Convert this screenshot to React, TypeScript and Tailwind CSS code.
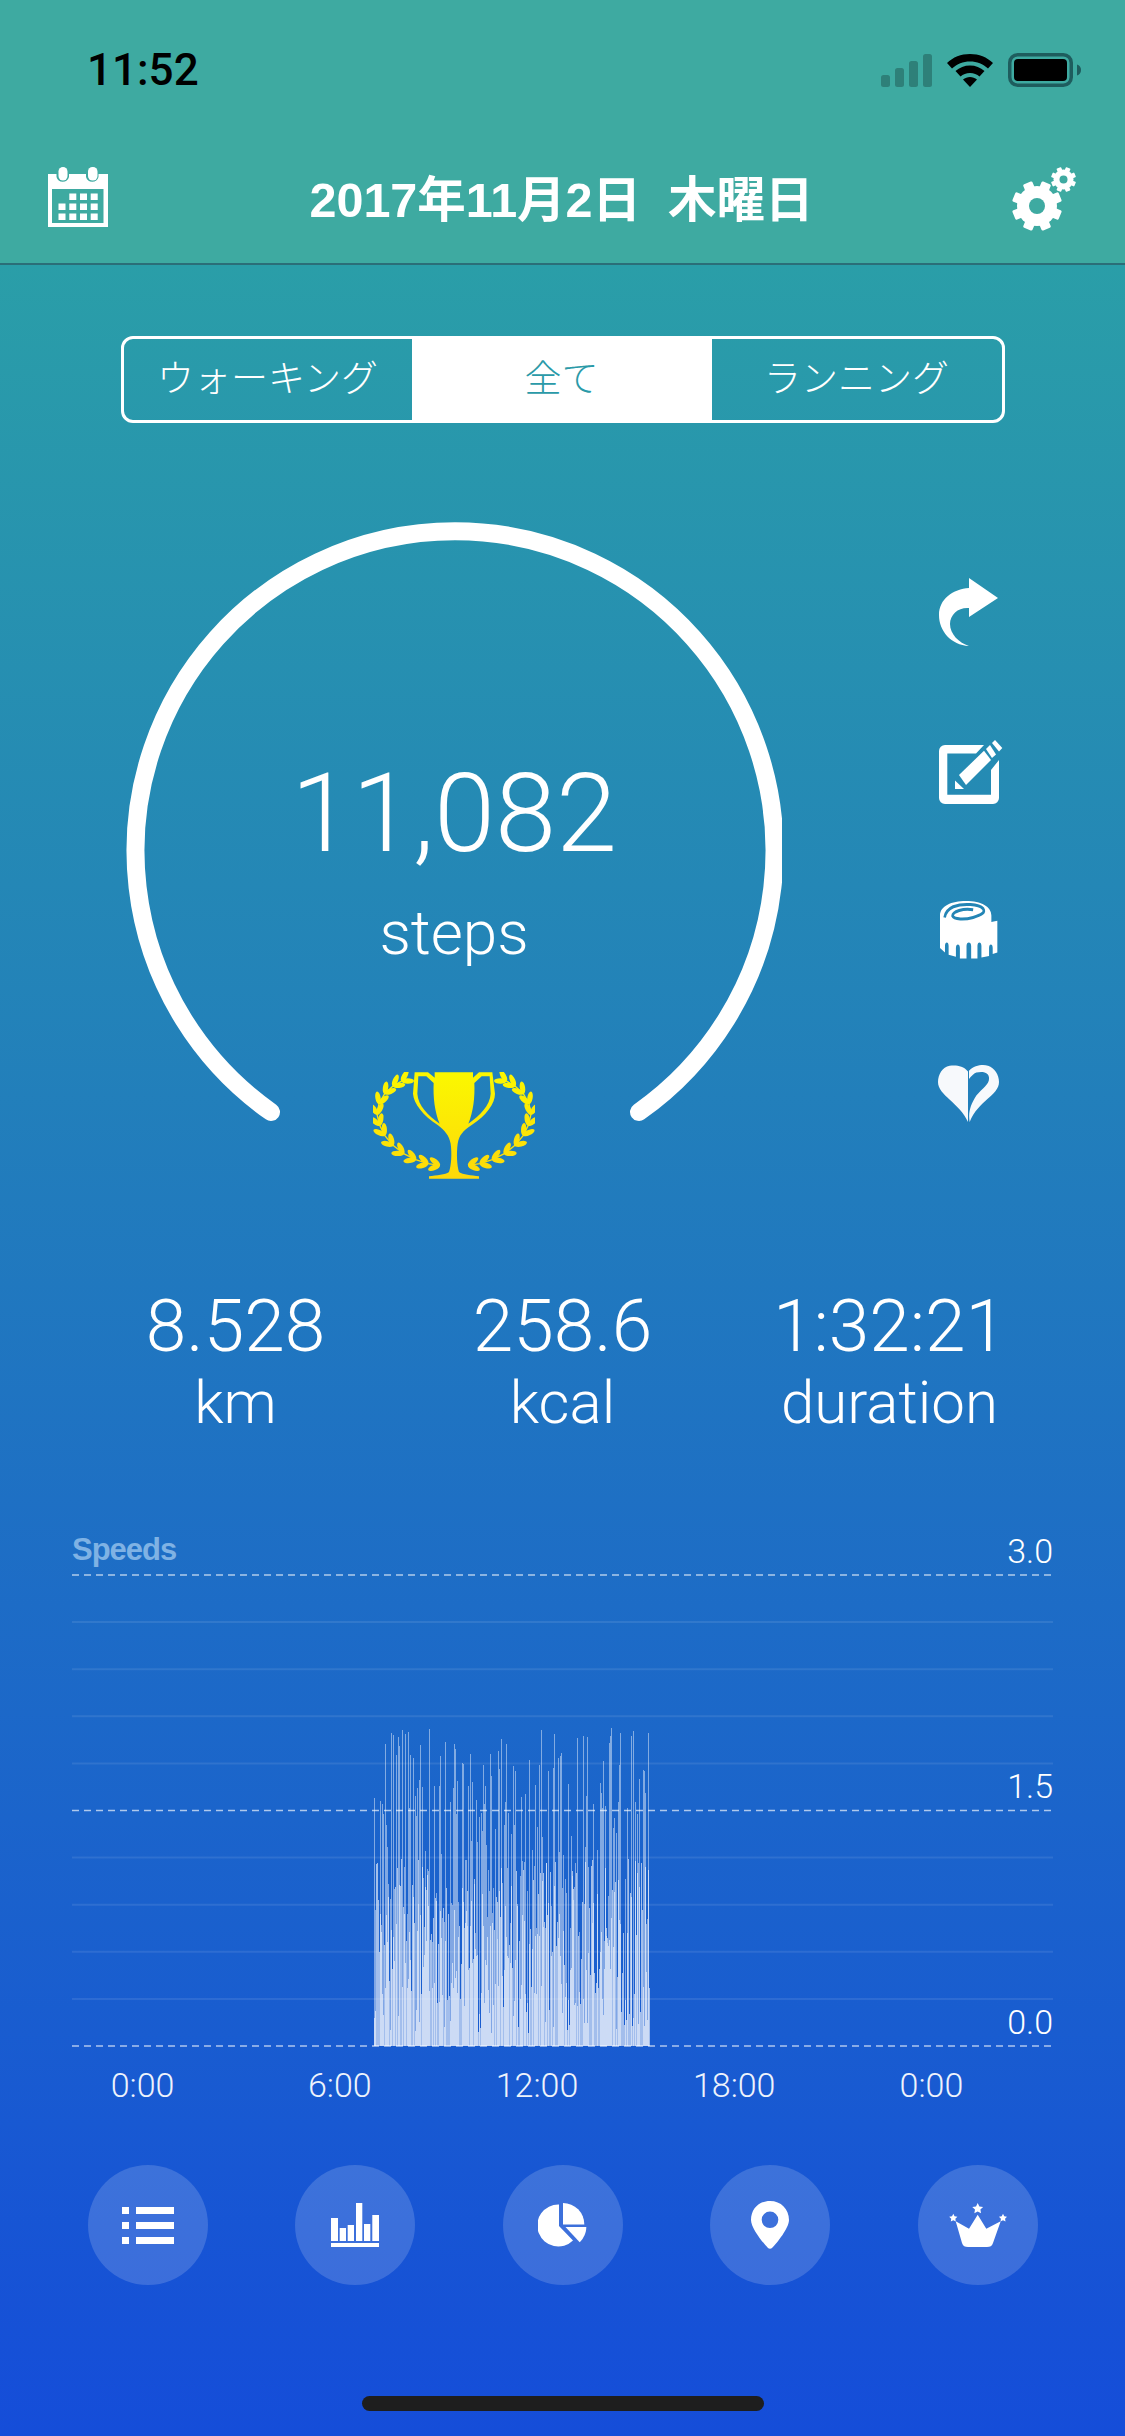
const stats = [
  { value: "8.528", label: "km" },
  { value: "258.6", label: "kcal" },
  { value: "1:32:21", label: "duration" },
];

const hours = ["0:00", "6:00", "12:00", "18:00", "0:00"];

// seeded so the bars come out the same on every run
function speedBars() {
  let seed = 11082;
  const rnd = () => {
    seed = (seed * 16807) % 2147483647;
    return seed / 2147483647;
  };
  const low: { x: number; h: number }[] = [];
  const high: { x: number; h: number }[] = [];
  for (let x = 302; x < 578; x += 1) {
    const base = 0.04 + rnd() * 0.55;
    low.push({ x, h: base * 319 });
    if (rnd() > 0.3) {
      const r = rnd();
      high.push({ x, h: (r > 0.8 ? 1 - rnd() * 0.1 : 0.32 + rnd() * 0.6) * 319 });
    }
  }
  return { low, high };
}

function CalendarIcon() {
  return (
    <svg viewBox="0 0 60 60" className="h-[60px] w-[60px]" fill="white">
      <path
        fillRule="evenodd"
        d="M0 7h8.500v3a6.500 6.500 0 0 0 12.500 0V7h17v3a6.500 6.500 0 0 0 12.500 0V7H60v53H0zM4 22v34h51.500V22z"
      />
      <rect x="10.500" y="0" width="9" height="13.500" rx="4.500" />
      <rect x="40" y="0" width="9.500" height="13.500" rx="4.500" />
      {[26.5, 36.5, 46.5].map((y, row) =>
        [10.5, 21.3, 32, 42.7].map((x, col) =>
          row === 0 && col === 0 ? null : <rect key={`${x}-${y}`} x={x} y={y} width="7" height="6.500" />,
        ),
      )}
    </svg>
  );
}

function Gear({ cx, cy, r, hole }: { cx: number; cy: number; r: number; hole: number }) {
  return (
    <g fill="white">
      {[0, 45, 90, 135].map((a) => (
        <rect
          key={a}
          x={cx - r * 0.2}
          y={cy - r}
          width={r * 0.4}
          height={r * 2}
          rx={r * 0.06}
          transform={`rotate(${a + 22.5} ${cx} ${cy})`}
        />
      ))}
      <circle cx={cx} cy={cy} r={r * 0.8} />
      <circle cx={cx} cy={cy} r={hole} fill="#3eaaa1" />
    </g>
  );
}

function GearsIcon() {
  return (
    <svg viewBox="0 0 64 64" className="h-[64px] w-[64px]">
      <Gear cx={25} cy={39} r={25} hole={8} />
      <Gear cx={51.5} cy={12.5} r={12.5} hole={4} />
    </svg>
  );
}

function StatusIcons() {
  return (
    <div className="flex items-center gap-[15px]">
      <svg width="51" height="33" viewBox="0 0 51 33" fill="#2e8079">
        <rect x="0" y="21" width="9" height="12" rx="2.500" />
        <rect x="14" y="14" width="9" height="19" rx="2.500" />
        <rect x="28" y="7" width="9" height="26" rx="2.500" />
        <rect x="42" y="0" width="9" height="33" rx="2.500" />
      </svg>
      <svg width="46" height="33" viewBox="0 0 46 33" fill="black">
        <path d="M23 0c9 0 17 3.200 23 9l-5 5.500C36 10 30 7.500 23 7.500S10 10 5 14.500L0 9C6 3.200 14 0 23 0z" />
        <path d="M23 11.500c5.500 0 10.500 2 14.500 5.500l-5 5.500C30 20.200 26.700 19 23 19s-7 1.200-9.500 3.500l-5-5.500c4-3.500 9-5.500 14.500-5.500z" />
        <path d="M23 23c2.500 0 5 1 7 2.500L23 33l-7-7.500c2-1.500 4.500-2.500 7-2.500z" />
      </svg>
      <svg width="73" height="34" viewBox="0 0 73 34">
        <rect x="1.750" y="1.750" width="61.500" height="30.500" rx="8" fill="none" stroke="#1e5d5e" strokeWidth="3.500" />
        <rect x="6" y="6" width="53" height="22" rx="4" fill="black" />
        <path d="M69 11.500c2.500.5 4 2.800 4 5.500s-1.500 5-4 5.500z" fill="#1e5d5e" />
      </svg>
    </div>
  );
}

function Gauge() {
  return (
    <svg viewBox="0 0 656 600" className="h-[600px] w-[656px]" fill="none">
      <path d="M145 590 A319.500 319.500 0 1 1 513 590" stroke="white" strokeWidth="18" strokeLinecap="round" />
    </svg>
  );
}

const wreath = [
  [300, 375], [265, 370], [228, 358], [192, 340], [160, 315], [135, 285],
  [120, 255], [112, 222], [118, 190], [135, 160], [160, 137], [186, 122],
];

function Laurel({ flip }: { flip?: boolean }) {
  return (
    <g transform={flip ? "translate(686 0) scale(-1 1)" : undefined} fill="url(#cup)">
      <polyline points={wreath.map((p) => p.join(",")).join(" ")} fill="none" stroke="url(#cup)" strokeWidth="4" />
      {wreath.map(([x, y], i) => {
        const prev = wreath[Math.max(i - 1, 0)];
        const next = wreath[Math.min(i + 1, wreath.length - 1)];
        const dir = (Math.atan2(next[1] - prev[1], next[0] - prev[0]) * 180) / Math.PI;
        return (
          <g key={i}>
            {[-30, 30].map((d) => (
              <ellipse
                key={d}
                cx={x + 18}
                cy={y}
                rx="19"
                ry="8"
                transform={`rotate(${dir + d} ${x} ${y})`}
              />
            ))}
          </g>
        );
      })}
    </g>
  );
}

function Trophy() {
  return (
    <svg viewBox="100 95 486 321" className="h-[107px] w-[162px]">
      <defs>
        <linearGradient id="cup" gradientUnits="userSpaceOnUse" x1="0" y1="95" x2="0" y2="416">
          <stop offset="0" stopColor="#fbf800" />
          <stop offset="1" stopColor="#fdd80a" />
        </linearGradient>
      </defs>
      <Laurel />
      <Laurel flip />
      <path
        fill="url(#cup)"
        fillRule="evenodd"
        d="M225 96H265L285 112V96H400V112L418 96H458L466 160C466 190 440 225 395 255C370 272 358 285 354 310C350 340 352 375 358 395C370 403 395 405 418 408V415H268V408C290 405 318 403 328 395C335 375 337 340 333 310C328 285 316 272 295 255C250 225 222 190 220 160ZM236 108H260L282 128C280 170 285 215 300 250C265 225 235 195 233 160ZM450 108H426L404 128C406 170 401 215 386 250C421 225 451 195 453 160Z"
      />
    </svg>
  );
}

function ShareIcon() {
  return (
    <svg viewBox="0 0 59 68" className="h-[68px] w-[59px]" fill="white">
      <path d="M30 0L59 20L30 39V30C20 29 11 36 11 46C11 56 20 65 30 68C12 67 0 53 0 37C0 21 14 11 30 10Z" />
    </svg>
  );
}

function EditIcon() {
  return (
    <svg viewBox="0 0 64 64" className="ml-[4px] h-[64px] w-[64px]" fill="white">
      <path d="M6 5H45L37 13.500H8.300V54.700H52V30L60 20V58a6 6 0 0 1-6 6H6a6 6 0 0 1-6-6V11a6 6 0 0 1 6-6z" />
      <path d="M20 35L45 10.700L52 20L27 45z" />
      <path d="M16 40.600L25 49H16z" />
      <path d="M47 9L51 5L57 14.500L53 18z" />
      <path d="M53 3L56 0L63.300 8L60 11.500z" />
    </svg>
  );
}

function TapeIcon() {
  return (
    <svg viewBox="120 917 175 152" preserveAspectRatio="none" className="h-[58px] w-[58px]">
      <path
        fill="white"
        d="M120 955C120 930 155 917 198 917C245 917 275 932 275 955V972L293 969V1052L279 1056V1040C279 1028 268 1028 268 1040V1061L245 1065V1035C245 1023 233 1023 233 1035V1068H214V1035C214 1023 200 1023 200 1035V1068H180V1040C180 1028 168 1028 168 1040V1063L146 1058V1035C146 1023 135 1023 135 1035V1052L120 1040Z"
      />
      <path
        fill="none"
        stroke="#2385b5"
        strokeWidth="8"
        d="M220 940C190 935 158 945 158 956C162 966 195 966 220 960C245 954 258 947 250 937C238 925 190 922 160 932C145 938 136 948 134 960"
      />
    </svg>
  );
}

function HeartIcon() {
  return (
    <svg viewBox="115 1345 183 150" preserveAspectRatio="none" className="h-[57px] w-[61px]" fill="#f7f9fc">
      <path d="M205 1362C190 1345 165 1345 150 1347C128 1350 115 1370 115 1390C115 1425 180 1445 205 1495Z" />
      <path d="M208 1360C225 1345 250 1343 265 1347C285 1353 298 1370 298 1390C298 1425 235 1440 210 1495C205 1470 212 1450 230 1425C250 1405 270 1395 268 1378C266 1362 245 1362 230 1365C222 1368 214 1375 208 1382Z" />
    </svg>
  );
}

function ListIcon() {
  return (
    <svg viewBox="0 0 52 37" className="h-[37px] w-[52px]" fill="white">
      {[0, 15, 30].map((y) => (
        <g key={y}>
          <rect x="0" y={y} width="7" height="7" />
          <rect x="14" y={y} width="38" height="7" />
        </g>
      ))}
    </svg>
  );
}

function BarsIcon() {
  return (
    <svg viewBox="0 0 48 44" className="h-[44px] w-[48px]" fill="white">
      <rect x="0" y="15" width="7" height="23" />
      <rect x="8.700" y="25" width="6.300" height="13" />
      <rect x="16.700" y="22" width="6.300" height="16" />
      <rect x="25" y="0" width="6.300" height="38" />
      <rect x="33" y="21" width="6.300" height="17" />
      <rect x="41.300" y="12" width="6.700" height="26" />
      <rect x="0" y="40" width="48" height="4" />
    </svg>
  );
}

function PieIcon() {
  return (
    <svg viewBox="0 0 49 44" className="h-[44px] w-[49px]" fill="white">
      <path d="M21 1.500V23L35 37.500A21 21 0 1 1 21 1.500Z" />
      <path d="M25 0V21.500H46.300A21.300 21.300 0 0 0 25 0Z" />
      <path d="M27.500 24H48.300C48.300 30 45.500 35.500 41.700 39.300Z" />
    </svg>
  );
}

function PinIcon() {
  return (
    <svg viewBox="0 0 38 48" className="h-[48px] w-[38px]" fill="white">
      <path
        fillRule="evenodd"
        d="M19 0C30 0 38 8 38 19C38 27 26 42 21 47C20 48 18 48 17 47C12 42 0 27 0 19C0 8 8 0 19 0ZM19 10.500a8.300 8.300 0 1 0 0 16.600a8.300 8.300 0 0 0 0-16.600Z"
      />
    </svg>
  );
}

function starPoints(cx: number, cy: number, r: number) {
  return Array.from({ length: 10 }, (_, i) => {
    const a = (i * Math.PI) / 5 - Math.PI / 2;
    const d = i % 2 === 0 ? r : r * 0.5;
    return `${cx + d * Math.cos(a)},${cy + d * Math.sin(a)}`;
  }).join(" ");
}

function CrownIcon() {
  return (
    <svg viewBox="0 0 58 44" className="h-[44px] w-[58px]" fill="white">
      <path d="M6.700 18.300L20 25.700L28.700 11.700L37.300 25.700L51.700 18.300L44 40C43 43 41 44 38 44H19C16 44 14 43 13 40Z" />
      <polygon points={starPoints(28.7, 5.7, 5.7)} />
      <polygon points={starPoints(4.3, 15, 4.3)} />
      <polygon points={starPoints(54, 15, 4.3)} />
    </svg>
  );
}

const tabIcons = [ListIcon, BarsIcon, PieIcon, PinIcon, CrownIcon];

function SpeedChart() {
  const { low, high } = speedBars();
  const rows = Array.from({ length: 11 }, (_, i) => i);
  return (
    <div className="relative ml-[72px] h-[535px] w-[981px]">
      <svg viewBox="0 0 981 535" className="block h-[535px] w-[981px]">
        <g shapeRendering="crispEdges">
          {high.map((b) => (
            <rect key={b.x} x={b.x} y={516 - b.h} width="1" height={b.h} fill="#ffffff" fillOpacity="0.45" />
          ))}
          {low.map((b) => (
            <rect key={b.x} x={b.x} y={516 - b.h} width="1" height={b.h} fill="#ffffff" fillOpacity="0.6" />
          ))}
        </g>
        {rows.map((i) => {
          const y = 45 + i * 47.1;
          const dashed = i % 5 === 0;
          return (
            <line
              key={i}
              x1="0"
              x2="981"
              y1={y}
              y2={y}
              stroke="#ffffff"
              strokeOpacity={dashed ? 0.65 : 0.09}
              strokeWidth={dashed ? 1.5 : 2}
              strokeDasharray={dashed ? "7 5" : undefined}
            />
          );
        })}
      </svg>
      <span className="absolute left-0 top-0 font-['Liberation_Sans',sans-serif] text-[31px] font-bold leading-[40px] tracking-[-1px] text-[#7fb2e4]">
        Speeds
      </span>
      <span className="absolute right-0 top-[1px] text-[34px] font-light leading-[40px]">3.0</span>
      <span className="absolute right-0 top-[236px] text-[34px] font-light leading-[40px]">1.5</span>
      <span className="absolute right-0 top-[472px] text-[34px] font-light leading-[40px]">0.0</span>
    </div>
  );
}

export default function App() {
  return (
    <div className="flex h-[2436px] w-[1125px] flex-col overflow-hidden bg-[linear-gradient(180deg,#2a9ea8_265px,#154dd9_100%)] font-['Roboto','Noto_Sans_CJK_JP',sans-serif] text-white">
      <header className="flex h-[265px] flex-col border-b-2 border-[#2b6e78] bg-[#3eaaa1]">
        <div className="flex h-[140px] items-center justify-between pl-[87px] pr-[44px]">
          <span className="text-[44px] font-medium text-black">11:52</span>
          <StatusIcons />
        </div>
        <div className="flex flex-1 items-start justify-between pl-[48px] pr-[49px] pt-[27px]">
          <CalendarIcon />
          <h1 className="ml-[3px] mt-[1px] font-['Liberation_Sans','Noto_Sans_CJK_JP',sans-serif] text-[48.5px] font-semibold leading-[64px]">
            2017年11月2日&nbsp;&nbsp;木曜日
          </h1>
          <GearsIcon />
        </div>
      </header>

      <div className="mx-auto mt-[71px] flex h-[87px] w-[884px] overflow-hidden rounded-[12px] border-[3px] border-white text-[37px] font-light">
        <div className="flex w-[288px] items-center justify-center">ウォーキング</div>
        <div className="flex w-[300px] items-center justify-center bg-white text-[#2a9aa8]">全て</div>
        <div className="flex flex-1 items-center justify-center">ランニング</div>
      </div>

      <div className="ml-[126px] mt-[99px] flex h-[600px]">
        <div className="relative h-[600px] w-[656px]">
          <Gauge />
          <div className="absolute inset-x-0 top-[232px] flex flex-col items-center font-light">
            <span className="text-[110px] leading-[120px]">11,082</span>
            <span className="mt-[23px] text-[62px] leading-[72px]">steps</span>
          </div>
          <div className="absolute left-[247px] top-[550px]">
            <Trophy />
          </div>
        </div>
        <div className="ml-[154px] flex w-[65px] flex-col items-center pt-[56px]">
          <ShareIcon />
          <div className="mt-[94px]">
            <EditIcon />
          </div>
          <div className="mt-[97px]">
            <TapeIcon />
          </div>
          <div className="mt-[106px]">
            <HeartIcon />
          </div>
        </div>
      </div>

      <div className="ml-[72px] mt-[166px] grid w-[981px] grid-cols-3 text-center font-light">
        {stats.map((s) => (
          <div key={s.label} className="flex flex-col">
            <span className="text-[73px] leading-[76px]">{s.value}</span>
            <span className="mt-[3px] text-[60px] leading-[72px]">{s.label}</span>
          </div>
        ))}
      </div>

      <div className="mt-[91px]">
        <SpeedChart />
      </div>

      <div className="ml-[44px] grid w-[986px] grid-cols-5 text-center text-[34px] font-light leading-[40px] text-[#eef3fc]">
        {hours.map((h, i) => (
          <span key={i}>{h}</span>
        ))}
      </div>

      <nav className="mx-auto mt-[60px] flex w-[950px] justify-between">
        {tabIcons.map((Icon, i) => (
          <div key={i} className="flex h-[120px] w-[120px] items-center justify-center rounded-full bg-white/[0.16]">
            <Icon />
          </div>
        ))}
      </nav>

      <div className="mx-auto mt-[111px] h-[15px] w-[402px] rounded-[8px] bg-[#1e1e1e]" />
    </div>
  );
}
